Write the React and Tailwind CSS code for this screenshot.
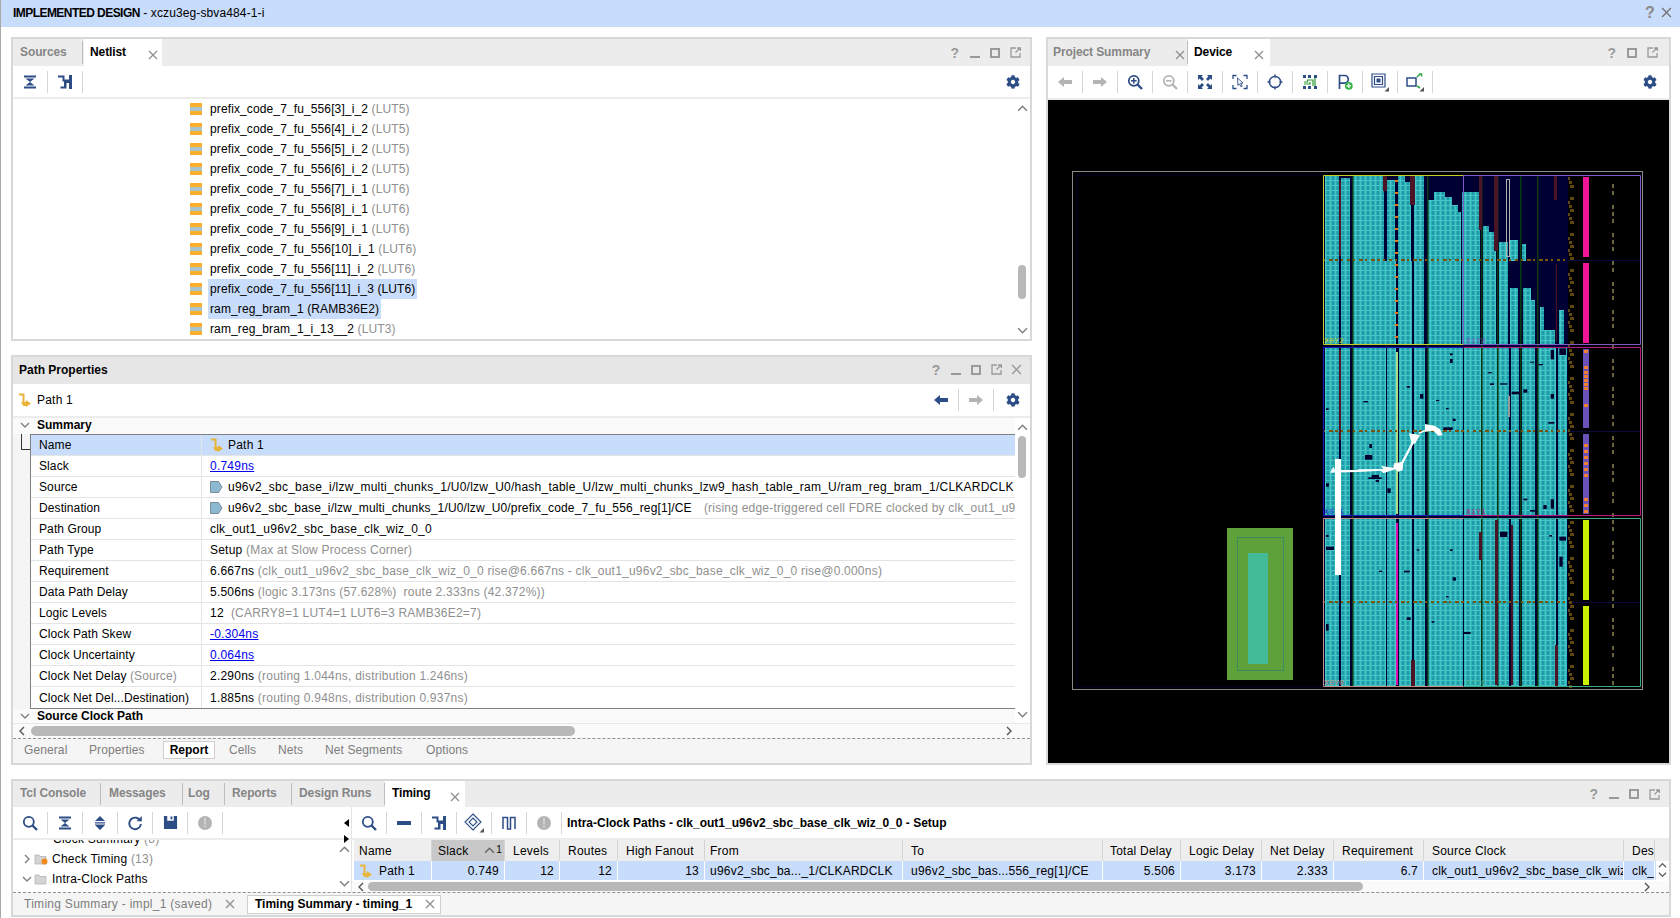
import React from "react";
import { FaCog } from "react-icons/fa";

const NAVY = "#2d4d86";
const GR = "#b4b4b4";

const Sv = ({ s = 16, children }) => (
  <svg width={s} height={s} viewBox="0 0 16 16" className="shrink-0">{children}</svg>
);
const Gear = () => <FaCog size={14} color={NAVY} />;
const Collapse = () => (
  <Sv><path d="M2 1.5h12v2H2zM2 12.5h12v2H2zM3.5 4.5h9L8 8zM8 8l4.5 3.5h-9z" fill={NAVY} /></Sv>
);
const ExpandI = () => (
  <Sv><path d="M8 1l5 5H3zM3 7h10v.8H3zM3 8.6h10v.8H3zM3 10h10l-5 5z" fill={NAVY} /></Sv>
);
const HI = () => (
  <Sv><path d="M1 1.5h6.5v4H12V1h3v14h-3V9H9.5v5.5H3.5v-2h3.5V7.5H5.5V3.5H1z" fill={NAVY} /></Sv>
);
const ArrowL = ({ c = NAVY }) => <Sv><path d="M1 8l6-5v3h8v4H7v3z" fill={c} /></Sv>;
const ArrowR = ({ c = GR }) => <Sv><path d="M15 8l-6-5v3H1v4h8v3z" fill={c} /></Sv>;
const Mag = ({ c = NAVY, plus, minus }) => (
  <Sv>
    <circle cx="6.8" cy="6.8" r="5" fill="none" stroke={c} strokeWidth="1.8" />
    <path d="M10.5 10.5l4.5 4.5" stroke={c} strokeWidth="2.4" />
    {plus && <path d="M4 6.8h5.6M6.8 4v5.6" stroke={c} strokeWidth="1.6" />}
    {minus && <path d="M4 6.8h5.6" stroke={c} strokeWidth="1.6" />}
  </Sv>
);
const Fit = () => (
  <Sv><path d="M1 1h5L4.5 2.6 7 5 5 7 2.6 4.5 1 6zM15 1v5l-1.6-1.5L11 7 9 5l2.4-2.4L10 1zM1 15v-5l1.6 1.5L5 9l2 2-2.4 2.4L6 15zM15 15h-5l1.5-1.6L9 11l2-2 2.4 2.4L15 10z" fill={NAVY} /></Sv>
);
const FitSel = () => (
  <Sv>
    <path d="M1 5V1.5h3.5M11.5 1.5H15V5M1 11v3.5h3.5M11.5 14.5H15V11" fill="none" stroke={NAVY} strokeWidth="1.3" />
    <path d="M5.5 4l5.5 5-2.4.2 1.6 3-1.2.6-1.5-3L6 11.5z" fill="#fff" stroke={NAVY} strokeWidth=".9" />
  </Sv>
);
const Target = () => (
  <Sv><circle cx="8" cy="8" r="5.6" fill="none" stroke={NAVY} strokeWidth="1.5" /><path d="M8 .5v3M8 12.5v3M.5 8h3M12.5 8h3" stroke={NAVY} strokeWidth="1.5" /></Sv>
);
const Route = () => (
  <Sv>
    <path d="M1 1h3v3H1zM6 1h3v3H6zM12 1h3v3h-3zM1 12h3v3H1zM6 12h3v3H6zM12 12h3v3h-3z" fill={NAVY} />
    <path d="M2 8h3.5V6H11v6M13 4v8M2 10h6V8" fill="none" stroke="#2f9a36" strokeWidth="1.2" />
  </Sv>
);
const PPlus = () => (
  <Sv>
    <path d="M2.5 15V1.5h5a3.7 3.7 0 010 7.6h-5" fill="none" stroke={NAVY} strokeWidth="1.7" />
    <circle cx="11.8" cy="11.8" r="3.9" fill="#37b44a" />
    <path d="M9.6 11.8h4.4M11.8 9.6v4.4" stroke="#fff" strokeWidth="1.2" />
  </Sv>
);
const Nested = () => (
  <svg width="20" height="20" viewBox="0 0 20 20" className="overflow-visible shrink-0">
    <path d="M2 2h13v13H2z" fill="none" stroke={NAVY} strokeWidth="1.2" />
    <path d="M4.5 4.5h8v8h-8z" fill="none" stroke={NAVY} strokeWidth="1.2" />
    <path d="M6.5 6.5h4v4h-4z" fill={NAVY} />
    <path d="M19 15v4.5h-4.5z" fill="#555" />
  </svg>
);
const Expander = () => (
  <svg width="20" height="20" viewBox="0 0 20 20" className="overflow-visible shrink-0">
    <path d="M2 6h9v8H2z" fill="#fff" stroke={NAVY} strokeWidth="1.5" />
    <path d="M12 5l3-3M14 2h2.5v2.5M12 14l3 2" stroke="#35a845" strokeWidth="1.6" fill="none" />
    <path d="M19 15v4.5h-4.5z" fill="#555" />
  </svg>
);
const Refresh = () => (
  <Sv><path d="M13 5.2A5.8 5.8 0 103.3 11.7 5.8 5.8 0 0013.8 9" fill="none" stroke={NAVY} strokeWidth="1.9" /><path d="M9.5 6.2h5.3V1z" fill={NAVY} /></Sv>
);
const Save = () => (
  <Sv s={15}><path d="M1 1h3.5v5h7V1H15v14H1zM8 1.5h2v3H8z" fill={NAVY} /></Sv>
);
const Stop = () => (
  <Sv><circle cx="8" cy="8" r="7" fill={GR} /><path d="M7.2 3h1.6v6.4H7.2zM7.2 10.6h1.6v1.7H7.2z" fill="#d8d8d8" /></Sv>
);
const Minus = () => <Sv><path d="M1 6h14v4H1z" fill={NAVY} /></Sv>;
const Diamond = () => (
  <svg width="20" height="20" viewBox="0 0 20 20" className="overflow-visible shrink-0">
    <path d="M9 1l8 8-8 8-8-8z" fill="none" stroke={NAVY} strokeWidth="1.1" />
    <path d="M9 5l4 4-4 4-4-4z" fill="none" stroke={NAVY} strokeWidth="1.1" />
    <path d="M20 15v4.5h-4.5z" fill="#555" />
  </svg>
);
const Wave = () => (
  <Sv><path d="M2 14V2.5h4.5V14h3V2.5H14V14" fill="none" stroke={NAVY} strokeWidth="1.5" /></Sv>
);
const PathI = ({ s = 14 }) => (
  <svg width={s} height={s} viewBox="0 0 14 14" className="shrink-0">
    <path d="M1 1.5h4.5v8.5" fill="none" stroke="#e9b43a" strokeWidth="2" />
    <path d="M5.5 13L2.8 9.5l2.7-.5h2.4v-2L13 10.5 7.9 14v-1z" fill="#e9b43a" />
  </svg>
);
const Port = () => (
  <svg width="13" height="12" viewBox="0 0 13 12" className="shrink-0">
    <path d="M.5.5h8l3.5 5.5-3.5 5.5h-8z" fill="#8db8d2" stroke="#7c8c96" />
  </svg>
);
const Folder = ({ dot }) => (
  <svg width="14" height="12" viewBox="0 0 14 12" className="mx-[2px] shrink-0">
    <path d="M1 2h4l1 1.5h6v7.5H1z" fill="#d4d4d4" stroke="#b4b4b4" strokeWidth=".8" />
    {dot && <circle cx="10.5" cy="8.5" r="3" fill="#f28a1e" />}
  </svg>
);
const Lut = () => (
  <span className="w-3 h-3 bg-[#f9ae2c] flex items-center shrink-0">
    <span className="w-3 h-1 bg-[#a9c3cf]" />
  </span>
);
const Chev = ({ d = "down", c = "#808080", s = 10 }) => {
  const p = { down: "M1 3l4 4 4-4", up: "M1 7l4-4 4 4", left: "M7 1L3 5l4 4", right: "M3 1l4 4-4 4" }[d];
  return (
    <svg width={s} height={s} viewBox="0 0 10 10" className="shrink-0">
      <path d={p} fill="none" stroke={c} strokeWidth="1.4" />
    </svg>
  );
};
const X = ({ c = "#909090", s = 10 }) => (
  <svg width={s} height={s} viewBox="0 0 10 10" className="shrink-0">
    <path d="M1 1l8 8M9 1l-8 8" stroke={c} strokeWidth="1.3" />
  </svg>
);
const Help = () => <span className="w-5 text-center text-[14px] font-bold text-[#9a9a9a] leading-none">?</span>;
const Min = () => (
  <span className="w-5 flex justify-center"><span className="w-2.5 h-[2px] mt-2 bg-[#9a9a9a]" /></span>
);
const Max = () => (
  <span className="w-5 flex justify-center"><span className="w-2.5 h-2.5 border-2 border-[#9a9a9a]" /></span>
);
const Float = () => (
  <span className="w-5 flex justify-center">
    <svg width="11" height="11" viewBox="0 0 11 11"><path d="M6 1H1v9h9V6M5.5 5.5L10 1M7 1h3.5v3" fill="none" stroke="#9a9a9a" strokeWidth="1.3" /></svg>
  </span>
);

const Tab = ({ w, label, active, close, sep = true, pl = "pl-[7px]", xr = "right-[5px]" }) => (
  <div
    style={{ width: w }}
    className={
      "relative h-full flex items-center pb-[2px] shrink-0 font-bold tracking-[-0.1px] " + pl + " " +
      (active ? "bg-white text-black" : "text-[#858585] ") +
      (sep && !active ? " after:content-[''] after:absolute after:right-0 after:top-[2px] after:bottom-[2px] after:w-px after:bg-[#bdbdbd]" : "")
    }
  >
    {label}
    {close && <span className={"absolute top-[11px] " + xr}><X /></span>}
  </div>
);

const TB = ({ children, w = 35, sep = true }) => (
  <div style={{ width: w }} className={"h-[22px] flex items-center justify-center shrink-0 " + (sep ? "border-r border-[#d6d6d6]" : "")}>
    {children}
  </div>
);

const netRows = [
  ["prefix_code_7_fu_556[3]_i_2", "(LUT5)"],
  ["prefix_code_7_fu_556[4]_i_2", "(LUT5)"],
  ["prefix_code_7_fu_556[5]_i_2", "(LUT5)"],
  ["prefix_code_7_fu_556[6]_i_2", "(LUT5)"],
  ["prefix_code_7_fu_556[7]_i_1", "(LUT6)"],
  ["prefix_code_7_fu_556[8]_i_1", "(LUT6)"],
  ["prefix_code_7_fu_556[9]_i_1", "(LUT6)"],
  ["prefix_code_7_fu_556[10]_i_1", "(LUT6)"],
  ["prefix_code_7_fu_556[11]_i_2", "(LUT6)"],
  ["prefix_code_7_fu_556[11]_i_3", "(LUT6)", true],
  ["ram_reg_bram_1", "(RAMB36E2)", true],
  ["ram_reg_bram_1_i_13__2", "(LUT3)"],
];

const G = ({ children }) => <span className="text-[#8f8f8f]">{children}</span>;
const L = ({ children }) => <span className="text-[#0000ee] underline">{children}</span>;

const propRows = [
  ["Name", <span className="flex items-center gap-[4px]"><PathI /><span>Path 1</span></span>, true],
  ["Slack", <L>0.749ns</L>],
  ["Source", <span className="flex items-center gap-[5px]"><Port /><span className="tracking-[0.24px]">u96v2_sbc_base_i/lzw_multi_chunks_1/U0/lzw_U0/hash_table_U/lzw_multi_chunks_lzw9_hash_table_ram_U/ram_reg_bram_1/CLKARDCLK</span></span>],
  ["Destination", <span className="flex items-center gap-[5px]"><Port /><span className="tracking-[0.16px]">u96v2_sbc_base_i/lzw_multi_chunks_1/U0/lzw_U0/prefix_code_7_fu_556_reg[1]/CE</span><G>&nbsp;&nbsp;(rising edge-triggered cell FDRE clocked by clk_out1_u96v2_sbc_base_clk_wiz_0_0)</G></span>],
  ["Path Group", "clk_out1_u96v2_sbc_base_clk_wiz_0_0"],
  ["Path Type", <>Setup <G>(Max at Slow Process Corner)</G></>],
  ["Requirement", <>6.667ns <G>(clk_out1_u96v2_sbc_base_clk_wiz_0_0 rise@6.667ns - clk_out1_u96v2_sbc_base_clk_wiz_0_0 rise@0.000ns)</G></>],
  ["Data Path Delay", <>5.506ns <G>(logic 3.173ns (57.628%)&nbsp; route 2.333ns (42.372%))</G></>],
  ["Logic Levels", <>12 &nbsp;<G>(CARRY8=1 LUT4=1 LUT6=3 RAMB36E2=7)</G></>],
  ["Clock Path Skew", <L>-0.304ns</L>],
  ["Clock Uncertainty", <L>0.064ns</L>],
  [<>Clock Net Delay <G>(Source)</G></>, <>2.290ns <G>(routing 1.044ns, distribution 1.246ns)</G></>],
  ["Clock Net Del...Destination)", <>1.885ns <G>(routing 0.948ns, distribution 0.937ns)</G></>],
];

const teal = [
  [1325, 1339], [1341, 1350], [1353, 1386], [1387, 1396], [1399, 1412], [1414, 1425],
  [1427, 1463], [1464, 1481], [1482, 1497], [1498, 1509], [1511, 1519], [1522, 1535], [1538, 1556], [1558, 1567],
];
const topTeal = [
  [1325, 1339, 175], [1341, 1350, 178], [1353, 1384, 175], [1387, 1395, 180], [1398, 1405, 175], [1405, 1411, 182],
  [1414, 1424, 175], [1427, 1434, 200], [1434, 1445, 192], [1445, 1452, 197], [1452, 1458, 205], [1458, 1461, 212],
  [1462, 1470, 192], [1470, 1480, 192], [1483, 1489, 226], [1489, 1496, 232], [1499, 1508, 242], [1510, 1518, 240], [1522, 1526, 244],
];
const mid2 = [
  [1325, 1339, 261], [1341, 1350, 261], [1353, 1387, 261], [1387, 1396, 261], [1398, 1412, 261], [1414, 1424, 261],
  [1427, 1461, 261], [1462, 1480, 261], [1483, 1496, 261], [1499, 1508, 261], [1510, 1518, 288], [1523, 1531, 288], [1529, 1535, 300],
  [1540, 1544, 307], [1544, 1555, 330], [1559, 1564, 310],
];
const sp = [
  [378,205,8,5],[378,430,9,10],[495,345,22,14],[508,312,8,12],[515,405,22,8],[505,412,40,5],[527,420,10,6],[562,445,10,14],
  [750,40,8,6],[750,57,8,12],[660,162,10,14],[620,138,10,5],[708,180,10,3],[738,204,8,4],[758,236,9,7],[730,262,28,8],
  [490,183,14,4],[865,96,10,4],[870,130,12,5],[900,130,22,4],[935,155,22,8],[970,148,12,10],[990,65,12,3],[1015,72,14,4],
  [1052,30,10,28],[1052,162,10,14],[1045,246,18,5],[1078,25,20,20],[1052,478,10,28],[1030,495,10,12],[970,476,12,5],[990,510,22,5],
  [378,585,8,6],[378,620,24,10],[650,628,8,4],[750,628,8,5],[612,692,18,5],[537,692,10,4],[758,712,10,10],[738,768,8,4],
  [900,575,22,16],[1078,650,10,30],[1048,585,8,5],[1078,590,20,12],[378,852,8,20],[790,876,22,6],[620,832,12,8],[695,843,8,5],
];

function Device() {
  const rects = [];
  const regions = [[347, 432], [432, 516], [519, 603], [603, 687]];
  regions.forEach(([a, b], i) =>
    teal.forEach(([x1, x2], j) =>
      rects.push(<rect key={"t" + i + j} x={x1} y={a} width={x2 - x1} height={b - a} fill="url(#cells)" />)
    )
  );
  topTeal.forEach(([x1, x2, t], j) =>
    rects.push(<rect key={"u" + j} x={x1} y={t} width={x2 - x1} height={261 - t} fill="url(#cells)" />)
  );
  mid2.forEach(([x1, x2, t], j) =>
    rects.push(<rect key={"v" + j} x={x1} y={t} width={x2 - x1} height={344 - t} fill="url(#cells)" />)
  );
  const dots = [];
  for (let y = 177; y < 687; y += 7) {
    if ((y * 13) % 11 > 2) dots.push(<rect key={"o" + y} x={1612} y={y} width={2} height={4} fill="#6a6438" />);
  }
  const brown = [];
  for (let y = 177; y < 687; y += 4) {
    const k = (y * 7) % 9;
    if (k > 1) brown.push(<rect key={"b" + y} x={1568 + (k % 3)} y={y} width={2 + (k % 3)} height={3} fill="#5f4510" />);
  }
  const hdash = [];
  [260, 431, 602].forEach((y) => {
    for (let x = 1323; x < 1567; x += 6) {
      const k = (x * 5) % 7;
      hdash.push(<rect key={"h" + y + x} x={x} y={y - 1} width={2 + (k % 3)} height={2} fill="#7a5208" />);
    }
  });
  const orange = [];
  for (let y = 180; y < 344; y += 12) orange.push(<rect key={"or" + y} x={1395} y={y} width={3} height={2} fill="#f07010" />);
  const po = [];
  [[350,4],[366,4],[371,4],[375,4],[379,4],[383,4],[387,4],[404,4],[444,4],[450,4],[456,4],[462,4],[468,4],[474,4],[498,4],[504,4],[510,4]].forEach(([y, h]) =>
    po.push(<rect key={"p" + y} x={1584} y={y} width={4} height={h - 1} fill="#f08030" />)
  );
  return (
    <svg viewBox="1048 100 620 662" className="w-[620px] h-[662px] block">
      <defs>
        <pattern id="cells" x="0" y="0" width="5" height="5" patternUnits="userSpaceOnUse">
          <rect width="5" height="5" fill="#2bb0b4" />
          <rect x="2" y="1" width="2" height="4" fill="#2199aa" />
          <rect width="5" height="1" fill="#45c6c6" />
          <rect width="1" height="5" fill="#45c6c6" />
        </pattern>
      </defs>
      <rect x="1048" y="100" width="620" height="662" fill="#000" />
      <rect x="1072.5" y="171.5" width="570" height="518" fill="none" stroke="#8a8a8a" />
      <rect x="1077" y="175" width="246" height="512" fill="none" stroke="#00002c" />
      <rect x="1323" y="175" width="245" height="512" fill="#000033" />
      {rects}
      {[1352, 1427, 1520, 1537, 1481, 1497].map((x) => (
        <rect key={x} x={x} y="175" width="1.5" height="512" fill="#0b3a12" />
      ))}
      {[[1383,175,4,16],[1410,175,5,30],[1479,175,3,55],[1494,175,4,76],[1554,175,3,25],[1339,180,2,76],[1556,264,1,78],
        [1479,532,3,28],[1495,520,3,165],[1511,525,2,160],[1411,660,4,27],[1555,645,3,42],[1339,350,2,90]].map(([x, y, w, h], i) => (
        <rect key={"r" + i} x={x} y={y} width={w} height={h} fill="#4b1525" />
      ))}
      <rect x="1506.5" y="179.5" width="3" height="77" fill="none" stroke="#b0b0b0" />
      <rect x="1508" y="396" width="2" height="21" fill="#999" />
      <g transform="translate(1200 340) scale(.33333)">
        {sp.map(([x, y, w, h], i) => (
          <rect key={i} x={x} y={y} width={w} height={h} fill="#00002c" />
        ))}
      </g>
      {orange}
      <rect x="1396" y="352" width="2" height="162" fill="#a6dc8a" />
      <rect x="1396" y="523" width="2" height="162" fill="#e010b0" />
      {hdash}
      <path d="M1567 260.5h73M1567 431.5h73M1567 602.5h73" stroke="#0a0a40" />
      {brown}
      {dots}
      <rect x="1583" y="177" width="6" height="80" fill="#f0149a" />
      <rect x="1583" y="263" width="6" height="80" fill="#f0149a" />
      <rect x="1583" y="349" width="6" height="79" fill="#6a52b8" />
      <rect x="1583" y="434" width="6" height="80" fill="#6a52b8" />
      {po}
      <rect x="1583" y="520" width="6" height="80" fill="#c8f000" />
      <rect x="1583" y="606" width="6" height="79" fill="#c8f000" />
      <path d="M1323.5 175.5H1463.5V344.5H1323.5z" fill="none" stroke="#c4cc28" />
      <path d="M1463.5 175.5H1640.5V344.5H1463.5z" fill="none" stroke="#8058c8" />
      <path d="M1463.5 347.5H1323.5V515.5H1463.5" fill="none" stroke="#1a1ab4" />
      <path d="M1463.5 347.5H1640.5V515.5H1463.5" fill="none" stroke="#b81880" />
      <path d="M1463.5 518.5H1323.5V686.5H1463.5" fill="none" stroke="#c88c84" />
      <path d="M1463.5 518.5H1640.5V686.5H1463.5" fill="none" stroke="#3ca688" />
      <text x="1324" y="343" fontSize="8" fill="#c4cc28" fontFamily="Liberation Mono">X0Y2</text>
      <text x="1466" y="343" fontSize="8" fill="#8058c8" fontFamily="Liberation Mono">X1Y2</text>
      <text x="1324" y="514" fontSize="8" fill="#2a2ad0" fontFamily="Liberation Mono">X0Y1</text>
      <text x="1466" y="514" fontSize="8" fill="#b81880" fontFamily="Liberation Mono">X1Y1</text>
      <text x="1324" y="685" fontSize="8" fill="#c88c84" fontFamily="Liberation Mono">X0Y0</text>
      <text x="1466" y="685" fontSize="8" fill="#3ca688" fontFamily="Liberation Mono">X1Y0</text>
      <rect x="1227" y="528" width="66" height="152" fill="#5ea03a" />
      <rect x="1237.5" y="537.5" width="46" height="133" fill="none" stroke="#3e8a63" />
      <rect x="1248" y="553" width="20" height="111" fill="#43bb99" />
      <g transform="translate(1250 400) scale(.33333)" fill="#fff">
        <path d="M255 177h18v348h-18z" />
        <path d="M240 218l10-18 5 10h68v-2l77-1-7-9 37 5 2-13 28-5-2 25-13 5-10-7-35 12-7-8-70 4-83 2z" />
        <path d="M452 190l6 3 35-66-6-3z" />
        <path d="M477 100l33 5-15 26-10-1z" />
        <path d="M505 98l20-8 1 4-19 8z" />
        <path d="M525 72l30 6 15 10 8 17-13 2-15-15-25 3z" />
      </g>
    </svg>
  );
}

const VBar = ({ h, thumbTop, thumbH }) => (
  <div className="w-[14px] shrink-0 flex flex-col items-center relative" style={{ height: h }}>
    <span className="mt-[4px]"><Chev d="up" s={11} /></span>
    {thumbH ? <span className="absolute left-[3px] w-2 rounded bg-[#b8b8b8]" style={{ top: thumbTop, height: thumbH }} /> : null}
    <span className="mt-auto mb-[3px]"><Chev d="down" s={11} /></span>
  </div>
);

const Netlist = () => (
  <div className="h-[304px] border-2 border-[#d8d8d8] flex flex-col">
    <div className="h-[27px] bg-[#ececec] flex shrink-0">
      <Tab w={70} label="Sources" />
      <div className="w-px" />
      <Tab w={78} label="Netlist" active close pl="pl-[6px]" xr="right-[4px]" />
      <div className="ml-auto flex items-center pr-[5px] h-full">
        <Help /><Min /><Max /><Float />
      </div>
    </div>
    <div className="h-[33px] flex items-center pl-0 pr-[10px] border-b-2 border-[#ececec] shrink-0">
      <TB><Collapse /></TB>
      <TB><HI /></TB>
      <div className="ml-auto"><Gear /></div>
    </div>
    <div className="flex flex-1 min-h-0">
      <div className="flex-1 flex flex-col pl-[177px] overflow-hidden tracking-[0.12px]">
        {netRows.map(([n, t, sel], i) => (
          <div key={i} className="h-5 flex items-center shrink-0">
            <Lut />
            <span className={"ml-[6px] h-5 px-[2px] flex items-center whitespace-pre " + (sel ? "bg-[#c8dcfb]" : "")}>
              {n} <span className={sel ? "" : "text-[#8f8f8f]"}>{t}</span>
            </span>
          </div>
        ))}
      </div>
      <VBar h={240} thumbTop={166} thumbH={34} />
      <div className="w-[1px]" />
    </div>
  </div>
);

const PathProps = () => (
  <div className="h-[410px] border-2 border-[#d8d8d8] flex flex-col">
    <div className="h-[27px] bg-[#e6e6e6] flex items-center pl-[6px] pr-[4px] pb-[2px] font-bold tracking-normal shrink-0">
      Path Properties
      <div className="ml-auto flex items-center">
        <Help /><Min /><Max /><Float /><span className="w-5 flex justify-center"><X c="#9a9a9a" s={11} /></span>
      </div>
    </div>
    <div className="h-[32px] flex items-center pl-[5px] pr-[10px] shrink-0">
      <PathI />
      <span className="ml-[5px]">Path 1</span>
      <div className="ml-auto flex items-center">
        <TB><ArrowL /></TB>
        <TB><ArrowR /></TB>
        <div className="w-[26px] flex justify-end"><Gear /></div>
      </div>
    </div>
    <div className="h-[2px] bg-[#ececec] shrink-0" />
    <div className="flex h-[305px] shrink-0">
      <div className="flex-1 min-w-0 flex flex-col">
        <div className="h-4 flex items-center bg-[#fafafa] font-bold tracking-normal shrink-0 pb-[2px]">
          <span className="w-[24px] pl-[7px]"><Chev /></span>Summary
        </div>
        <div className="flex shrink-0">
          <div className="w-[17px] bg-[#f5f5f5] shrink-0 flex justify-center relative">
            <span className="absolute left-[8px] top-0 w-[9px] h-4 border-l border-b border-[#333]" />
          </div>
          <div className="flex-1 min-w-0 border-t border-b border-l border-[#808080]">
            {propRows.map(([a, b, sel], i) => (
              <div key={i} className={"grid grid-cols-[171px_1fr] h-[21px] border-b border-[#e4e4e4] last:border-b-0 " + (sel ? "bg-[#c8dcfb]" : "")}>
                <div className="pl-[8px] flex items-center whitespace-pre border-r border-[#e4e4e4] tracking-[0.1px]">{a}</div>
                <div className="pl-[8px] flex items-center whitespace-pre overflow-hidden min-w-0"><span className="flex items-center whitespace-pre">{b}</span></div>
              </div>
            ))}
          </div>
        </div>
        <div className="h-[14px] flex items-center bg-[#fafafa] font-bold tracking-normal shrink-0">
          <span className="w-[24px] pl-[7px]"><Chev /></span>Source Clock Path
        </div>
      </div>
      <VBar h={305} thumbTop={18} thumbH={42} />
      <div className="w-[1px]" />
    </div>
    <div className="h-[15px] flex items-center bg-[#fafafa] border-t border-[#e8e8e8] shrink-0">
      <span className="w-[18px] flex justify-center"><Chev d="left" c="#555" /></span>
      <span className="w-[544px] h-[10px] rounded-full bg-[#b8b8b8]" />
      <span className="ml-auto mr-[16px]"><Chev d="right" c="#555" /></span>
    </div>
    <div className="flex-1 border-t border-dashed border-[#909090] bg-[#f5f5f5] flex items-center pb-[2px] text-[#7d7d7d] tracking-[0.1px]">
      <span className="ml-[11px] w-[65px]">General</span>
      <span className="w-[74px]">Properties</span>
      <span className="w-[52px] h-[18px] flex items-center justify-center bg-white border border-[#cfcfcf] text-black font-bold tracking-normal">Report</span>
      <span className="ml-[14px] w-[49px]">Cells</span>
      <span className="w-[47px]">Nets</span>
      <span className="w-[101px]">Net Segments</span>
      <span>Options</span>
    </div>
  </div>
);

const DevicePanel = () => (
  <div className="flex-1 h-[728px] border-2 border-[#d8d8d8] flex flex-col">
    <div className="h-[27px] bg-[#ececec] flex shrink-0">
      <Tab w={140} label="Project Summary" close pl="pl-[5px]" xr="right-[3px]" />
      <Tab w={82} label="Device" active close pl="pl-[6px]" xr="right-[6px]" />
      <div className="ml-auto flex items-center pr-[7px] h-full">
        <Help /><Max /><Float />
      </div>
    </div>
    <div className="h-[32px] flex items-center pl-0 pr-[12px] shrink-0">
      <TB><ArrowL c={GR} /></TB>
      <TB><ArrowR /></TB>
      <TB><Mag plus /></TB>
      <TB><Mag c={GR} minus /></TB>
      <TB><Fit /></TB>
      <TB><FitSel /></TB>
      <TB><Target /></TB>
      <TB><Route /></TB>
      <TB><PPlus /></TB>
      <TB><Nested /></TB>
      <TB><Expander /></TB>
      <div className="ml-auto"><Gear /></div>
    </div>
    <div className="h-[2px] bg-[#ececec] shrink-0" />
    <div className="flex-1 bg-black overflow-hidden"><Device /></div>
  </div>
);

const hdr = [
  ["Name", "l", "pl-[5px]"], ["Slack", "s", "pl-[6px]"], ["Levels", "l", "pl-[8px]"], ["Routes", "l", "pl-[8px]"], ["High Fanout", "l", "pl-[8px]"], ["From", "l", "pl-[5px]"], ["To", "l", "pl-[8px]"],
  ["Total Delay", "l", "pl-[7px]"], ["Logic Delay", "l", "pl-[8px]"], ["Net Delay", "l", "pl-[8px]"], ["Requirement", "l", "pl-[8px]"], ["Source Clock", "l", "pl-[8px]"], ["Des", "l", "pl-[8px]"],
];
const row = [
  ["", "n", "pl-[5px]"], ["0.749", "r", ""], ["12", "r", ""], ["12", "r", ""], ["13", "r", ""], ["u96v2_sbc_ba..._1/CLKARDCLK", "l", "pl-[5px]"], ["u96v2_sbc_bas...556_reg[1]/CE", "l", "pl-[8px]"],
  ["5.506", "r", ""], ["3.173", "r", ""], ["2.333", "r", ""], ["6.7", "r", ""], ["clk_out1_u96v2_sbc_base_clk_wiz_0_0", "l", "pl-[8px]"], ["clk_", "l", "pl-[8px]"],
];
const COLS = "grid grid-cols-[78px_73px_55px_58px_87px_198px_200px_78px_81px_72px_90px_200px_31px]";

const Bottom = () => (
  <div className="h-[138px] border-2 border-[#d8d8d8] flex flex-col">
    <div className="h-[26px] bg-[#ececec] flex shrink-0">
      <Tab w={88} label="Tcl Console" />
      <div className="w-px" />
      <Tab w={81} label="Messages" />
      <Tab w={42} label="Log" pl="pl-[5px]" />
      <Tab w={67} label="Reports" />
      <Tab w={93} label="Design Runs" />
      <Tab w={80} label="Timing" active close />
      <div className="ml-auto flex items-center pr-[5px] h-full">
        <Help /><Min /><Max /><Float />
      </div>
    </div>
    <div className="h-[33px] flex items-center border-b-2 border-[#ececec] shrink-0">
      <TB><Mag /></TB>
      <TB><Collapse /></TB>
      <TB><ExpandI /></TB>
      <TB><Refresh /></TB>
      <TB><Save /></TB>
      <TB><Stop /></TB>
      <div className="w-[118px]" />
      <div className="w-[11px] flex flex-col items-center relative h-[31px] border-r border-[#e4e4e4]">
        <span className="mt-[12px] w-0 h-0 border-y-[4px] border-y-transparent border-r-[5px] border-r-black" />
        <span className="mt-auto -mb-[5px] w-0 h-0 border-y-[4px] border-y-transparent border-l-[5px] border-l-black" />
      </div>
      <TB><Mag /></TB>
      <TB><Minus /></TB>
      <TB><HI /></TB>
      <TB><Diamond /></TB>
      <TB><Wave /></TB>
      <TB><Stop /></TB>
      <span className="ml-[5px] font-bold whitespace-pre tracking-normal">Intra-Clock Paths - clk_out1_u96v2_sbc_base_clk_wiz_0_0 - Setup</span>
    </div>
    <div className="h-[52px] flex shrink-0">
      <div className="w-[339px] shrink-0 flex relative overflow-hidden border-r border-[#e4e4e4]">
        <div className="flex-1 flex flex-col -mt-[11px] pl-[9px]">
          <div className="h-5 pl-[31px] flex items-center whitespace-pre shrink-0">Clock Summary <G>(8)</G></div>
          <div className="h-5 flex items-center whitespace-pre shrink-0">
            <Chev d="right" /><Folder dot /><span className="ml-[2px]">Check Timing <G>(13)</G></span>
          </div>
          <div className="h-5 flex items-center whitespace-pre shrink-0">
            <Chev /><Folder /><span className="ml-[2px]">Intra-Clock Paths</span>
          </div>
        </div>
        <VBar h={52} />
      </div>
      <div className="flex-1 min-w-0 flex flex-col overflow-hidden">
        <div className="h-[21px] flex shrink-0">
          <div className="w-[2px] shrink-0" />
          <div className={COLS + " bg-[#eeeeee] h-full flex-1 overflow-hidden"}>
            {hdr.map(([t, k, pl], i) => (
              <div key={i} className={pl + " flex items-center whitespace-pre border-r border-[#d4d4d4] overflow-hidden " + (k === "s" ? "bg-[#c8c8c8]" : "")}>
                {t}
                {k === "s" && <span className="ml-auto pr-[2px] flex items-center gap-[1px] text-[10px]"><Chev d="up" c="#666" s={11} /><span className="-mt-[3px]">1</span></span>}
              </div>
            ))}
          </div>
        </div>
        <div className="h-[20px] flex shrink-0">
          <div className="w-[2px] shrink-0" />
          <div className={COLS + " bg-[#c8dcfb] h-[19px] flex-1 overflow-hidden"}>
            {row.map(([t, k, pl], i) => (
              <div key={i} className={pl + " pr-[5px] flex items-center whitespace-pre border-r border-white overflow-hidden " + (k === "r" ? "justify-end" : "")}>
                {k === "n" ? <span className="flex items-center gap-[6px] pl-0"><PathI /><span>Path 1</span></span> : t}
              </div>
            ))}
          </div>
          <div className="w-[13px] shrink-0 flex flex-col items-center bg-white -ml-[13px] z-10">
            <Chev d="up" c="#666" s={9} /><Chev d="down" c="#666" s={9} />
          </div>
        </div>
        <div className="h-[11px] flex items-center bg-[#fafafa]">
          <div className="w-[4px]" />
          <span className="w-[10px] flex justify-center"><Chev d="left" c="#555" /></span>
          <span className="w-[995px] h-[9px] rounded-full bg-[#b8b8b8] ml-[2px]" />
          <span className="ml-auto mr-[17px]"><Chev d="right" c="#555" /></span>
        </div>
      </div>
    </div>
    <div className="flex-1 border-t border-dashed border-[#909090] bg-[#f5f5f5] flex items-center">
      <span className="ml-[11px] w-[215px] text-[#7d7d7d] whitespace-pre flex items-center tracking-[0.28px]">Timing Summary - impl_1 (saved)<span className="ml-auto mr-[4px]"><X /></span></span>
      <span className="ml-[8px] w-[194px] h-[19px] pl-[7px] bg-white border border-[#cfcfcf] font-bold tracking-normal flex items-center whitespace-pre">Timing Summary - timing_1<span className="ml-auto mr-[5px]"><X /></span></span>
    </div>
  </div>
);

export default function App() {
  return (
    <div className="w-[1680px] h-[918px] bg-white border-l border-[#a8a8a8] text-[12px] tracking-[0.22px] text-black flex flex-col overflow-hidden font-['Liberation_Sans',sans-serif]">
      <div className="h-[27px] shrink-0 bg-[#c8dcfb] pl-[12px] pr-[8px] pb-[2px] flex items-center whitespace-pre">
        <span className="font-bold tracking-[-0.55px]">IMPLEMENTED DESIGN</span>
        <span className="tracking-[0.12px]"> - xczu3eg-sbva484-1-i</span>
        <span className="ml-auto text-[16px] font-bold text-[#8a8a8a] mr-[6px]">?</span>
        <X c="#777" s={11} />
      </div>
      <div className="flex gap-[14px] pl-[10px] pr-[9px] pt-[10px] shrink-0">
        <div className="w-[1021px] flex flex-col gap-[14px] shrink-0">
          <Netlist />
          <PathProps />
        </div>
        <DevicePanel />
      </div>
      <div className="pl-[10px] pr-[9px] pt-[14px] shrink-0">
        <Bottom />
      </div>
    </div>
  );
}
